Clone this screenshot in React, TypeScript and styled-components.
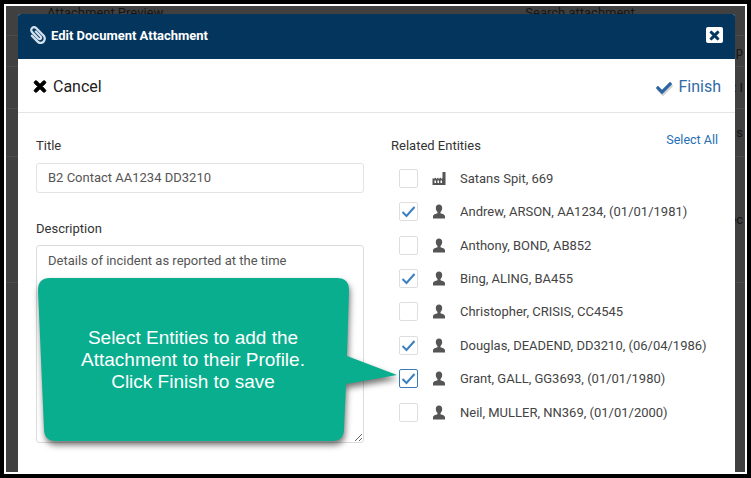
import React from "react";
import styled, { createGlobalStyle } from "styled-components";
import { FaCheck, FaPaperclip, FaTimes } from "react-icons/fa";

const Global = createGlobalStyle`
  html, body { margin: 0; padding: 0; background: #000; overflow: hidden; }
  * { box-sizing: border-box; }
`;

const Frame = styled.div`
  position: relative;
  width: 751px;
  height: 478px;
  border: 4px solid #000;
  background: #fff;
  padding: 2px 2px 2px 2px;
  font-family: Roboto, "Liberation Sans", sans-serif;
  overflow: hidden;
`;

const Backdrop = styled.div`
  width: 100%;
  height: 100%;
  background: #404040;
  color: #151515;
  font-size: 13px;
  overflow: hidden;
`;

const BackdropHead = styled.div`
  display: flex;
  height: 30px;
  padding-left: 41px;
  border-bottom: 1px solid #4c4c4c;
  line-height: 13px;
`;

const BackdropSearch = styled.span`
  margin-left: 362px;
`;

const BackdropRows = styled.div`
  display: flex;
  flex-direction: column;
  align-items: flex-end;
`;

const BackdropRow = styled.div<{ $h: number }>`
  height: ${(p) => p.$h}px;
  display: flex;
  align-items: center;
  border-bottom: 1px solid #4c4c4c;
  width: 100%;
  justify-content: flex-end;
  padding-right: 2px;
`;

const Modal = styled.div`
  position: absolute;
  left: 14px;
  top: 10px;
  width: 717px;
  height: 460px;
  background: #fff;
  border-radius: 3px 3px 0 0;
  color: #333;
`;

const Header = styled.div`
  height: 45px;
  background: #04355d;
  border-radius: 3px 3px 0 0;
  display: flex;
  align-items: center;
  justify-content: space-between;
  padding: 0 12px 3px 12px;
`;

const HeaderTitle = styled.div`
  display: flex;
  align-items: center;
  gap: 5px;
  color: #fff;
  font-size: 13px;
  font-weight: 700;
`;

const ClipIcon = styled(FaPaperclip)`
  width: 16px;
  height: 18px;
  color: #d3e1ee;
  transform: scaleX(-1);
`;

const CloseButton = styled.div`
  width: 17px;
  height: 16px;
  background: #fff;
  border-radius: 2px;
  display: flex;
  align-items: center;
  justify-content: center;
  color: #04355d;
  font-size: 13px;

  svg {
    stroke: currentColor;
    stroke-width: 30;
  }
`;

const Toolbar = styled.div`
  height: 54px;
  border-bottom: 1px solid #e5e5e5;
  display: flex;
  align-items: center;
  justify-content: space-between;
  padding: 2px 14px 0 15px;
  font-size: 16px;
`;

const ToolAction = styled.div<{ $blue?: boolean }>`
  display: flex;
  align-items: center;
  gap: 6px;
  color: ${(p) => (p.$blue ? "#2f6ca8" : "#222")};
`;

const CancelIcon = styled(FaTimes)`
  width: 14px;
  height: 17px;
  color: #000;
  stroke: currentColor;
  stroke-width: 30;
`;

const FinishIconWrap = styled.span`
  position: relative;
  width: 17px;
  height: 16px;
  display: inline-block;
  margin-right: 1px;
  top: 1px;
`;

const FinishCheck = styled(FaCheck)<{ $shadow?: boolean }>`
  position: absolute;
  width: 16px;
  height: 16px;
  left: ${(p) => (p.$shadow ? 3 : 2)}px;
  top: ${(p) => (p.$shadow ? 2 : 0)}px;
  color: ${(p) => (p.$shadow ? "#d2d2d2" : "#2a66a4")};
`;

const Body = styled.div`
  position: relative;
  display: grid;
  grid-template-columns: 328px 327px;
  column-gap: 27px;
  padding: 24px 0 0 18px;
  font-size: 13px;
`;

const Column = styled.div`
  display: flex;
  flex-direction: column;
`;

const Label = styled.div`
  height: 17px;
  line-height: 17px;
  color: #333;
  margin-bottom: 9px;
`;

const TitleInput = styled.input`
  width: 328px;
  height: 30px;
  padding: 0 11px 2px;
  border: 1px solid #e3e3e3;
  border-radius: 3px;
  font: inherit;
  color: #555;
  outline: none;
  margin-bottom: 27px;
`;

const DescriptionArea = styled.textarea`
  width: 328px;
  height: 198px;
  padding: 6px 11px;
  border: 1px solid #dcdcdc;
  border-radius: 3px;
  font: inherit;
  line-height: 17px;
  color: #555;
  outline: none;
  margin-top: -1px;
`;

const EntitiesHead = styled.div`
  display: flex;
  justify-content: space-between;
  height: 24px;
`;

const EntitiesLabel = styled.div`
  line-height: 17px;
  color: #333;
`;

const SelectAll = styled.a`
  color: #1f6fb5;
  font-size: 12.5px;
  line-height: 17px;
  margin-top: -6px;
`;

const EntityList = styled.div`
  display: flex;
  flex-direction: column;
  padding: 0.6px 0 0 8px;
`;

const EntityRow = styled.div`
  height: 33.4px;
  display: flex;
  align-items: center;
  color: #444;
`;

const CheckBox = styled.span<{ $focus?: boolean }>`
  width: 19px;
  height: 19px;
  flex: none;
  border: 1px solid ${(p) => (p.$focus ? "#3a7ab5" : "#dedede")};
  border-radius: 2px;
  display: flex;
  align-items: center;
  justify-content: center;
  background: #fff;
`;

const EntityIcon = styled.svg`
  width: 14px;
  height: 15px;
  margin-left: 14px;
  margin-right: 14px;
  flex: none;
  fill: #555;
`;

const Callout = styled.div`
  position: absolute;
  left: 20px;
  top: 165px;
  width: 360px;
  height: 164px;
  color: #fff;
`;

const CalloutShape = styled.svg`
  position: absolute;
  inset: 0;
  overflow: visible;
  filter: drop-shadow(1px 4px 3px rgba(0, 0, 0, 0.55));
`;

const CalloutText = styled.div`
  position: absolute;
  left: 0;
  top: 49px;
  width: 310px;
  text-align: center;
  font-family: "Liberation Sans", Arial, sans-serif;
  font-size: 19px;
  line-height: 22px;
`;

const Tick = () => (
  <svg width="15" height="13" viewBox="0 0 15 13" fill="none">
    <path d="M1.5 7 L5.5 11 L13.5 2" stroke="#3a7fc0" strokeWidth="2" />
  </svg>
);

const PersonIcon = () => (
  <EntityIcon viewBox="0 0 14 15">
    <path d="M7 .5c2 0 3.200 1.500 3.200 3.500 0 1.700-.7 3.200-1.700 4v1.300c1.800.6 4.500 1.300 4.500 3.200v2H1v-2c0-1.900 2.700-2.600 4.500-3.200V8c-1-.8-1.700-2.300-1.700-4C3.800 2 5 .5 7 .5z" />
  </EntityIcon>
);

const FactoryIcon = () => (
  <EntityIcon viewBox="0 0 14 15">
    <path
      fillRule="evenodd"
      d="M10.500 1h3v13H.5V7.500l1-.5v1l2.500-1.500v1.500l2.500-1.500v1.500L9 6.500V8l1.500-1zM2.500 9.500V12h1.500V9.500zm3 0V12h1.500V9.500zm3 0V12H10V9.500z"
    />
  </EntityIcon>
);

const entities = [
  { name: "Satans Spit, 669", icon: "factory", checked: false },
  { name: "Andrew, ARSON, AA1234, (01/01/1981)", checked: true },
  { name: "Anthony, BOND, AB852", checked: false },
  { name: "Bing, ALING, BA455", checked: true },
  { name: "Christopher, CRISIS, CC4545", checked: false },
  { name: "Douglas, DEADEND, DD3210, (06/04/1986)", checked: true },
  { name: "Grant, GALL, GG3693, (01/01/1980)", checked: true, focus: true },
  { name: "Neil, MULLER, NN369, (01/01/2000)", checked: false },
];

export default function App() {
  return (
    <Frame>
      <Global />
      <Backdrop>
        <BackdropHead>
          <span>Attachment Preview</span>
          <BackdropSearch>Search attachment</BackdropSearch>
        </BackdropHead>
        <BackdropRows>
          <BackdropRow $h={31}>rip</BackdropRow>
          <BackdropRow $h={42}>t I</BackdropRow>
          <BackdropRow $h={48}>s</BackdropRow>
          <BackdropRow $h={126}>ec</BackdropRow>
        </BackdropRows>
      </Backdrop>
      <Modal>
        <Header>
          <HeaderTitle>
            <ClipIcon />
            Edit Document Attachment
          </HeaderTitle>
          <CloseButton>
            <FaTimes />
          </CloseButton>
        </Header>
        <Toolbar>
          <ToolAction>
            <CancelIcon />
            Cancel
          </ToolAction>
          <ToolAction $blue>
            <FinishIconWrap>
              <FinishCheck $shadow />
              <FinishCheck />
            </FinishIconWrap>
            Finish
          </ToolAction>
        </Toolbar>
        <Body>
          <Column>
            <Label>Title</Label>
            <TitleInput readOnly defaultValue="B2 Contact AA1234 DD3210" />
            <Label>Description</Label>
            <DescriptionArea readOnly defaultValue="Details of incident as reported at the time" />
          </Column>
          <Column>
            <EntitiesHead>
              <EntitiesLabel>Related Entities</EntitiesLabel>
              <SelectAll>Select All</SelectAll>
            </EntitiesHead>
            <EntityList>
              {entities.map((e) => (
                <EntityRow key={e.name}>
                  <CheckBox $focus={e.focus}>{e.checked && <Tick />}</CheckBox>
                  {e.icon === "factory" ? <FactoryIcon /> : <PersonIcon />}
                  {e.name}
                </EntityRow>
              ))}
            </EntityList>
          </Column>
          <Callout>
            <CalloutShape width="360" height="164" viewBox="0 0 360 164">
              <path
                fill="#08ae8e"
                d="M12 0H299Q311 0 311 12L309 78 L359 97 L308 106 L306 151Q306 163 294 163H18Q6 163 6 151L0 12Q0 0 12 0Z"
              />
            </CalloutShape>
            <CalloutText>
              Select Entities to add the
              <br />
              Attachment to their Profile.
              <br />
              Click Finish to save
            </CalloutText>
          </Callout>
        </Body>
      </Modal>
    </Frame>
  );
}
